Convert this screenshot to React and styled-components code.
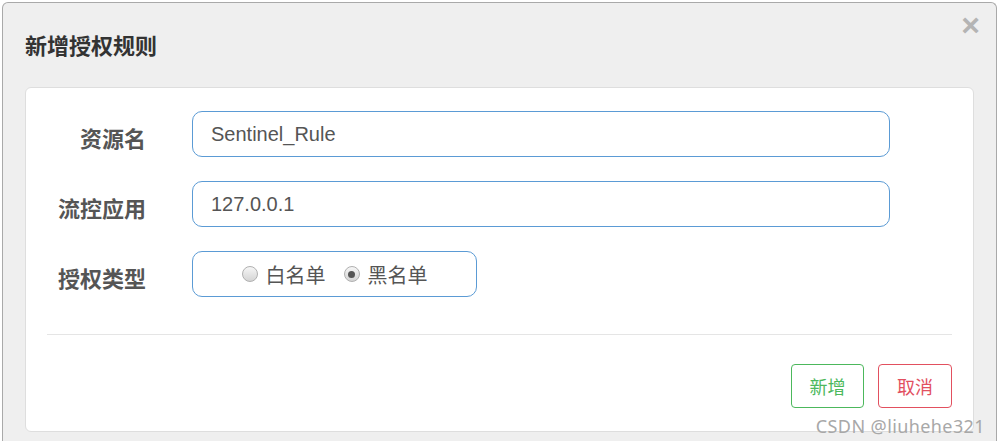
import React from 'react';
import styled, { createGlobalStyle } from 'styled-components';

const GlobalStyle = createGlobalStyle`
  body {
    margin: 0;
    background: #ffffff;
    font-family: "Liberation Sans", "Noto Sans CJK SC", sans-serif;
  }
`;

const Dialog = styled.div`
  position: relative;
  margin: 2px 2px 0 2px;
  height: 439px;
  box-sizing: border-box;
  background: #efefef;
  border: 1px solid #a9a9a9;
  border-bottom: none;
  border-radius: 6px 6px 0 0;
  display: flex;
  flex-direction: column;
`;

const Header = styled.div`
  height: 84px;
  display: flex;
  align-items: flex-start;
  justify-content: space-between;
  padding: 0 16px 0 22px;
  box-sizing: border-box;
`;

const Title = styled.h4`
  margin: 25px 0 0;
  font-size: 22px;
  line-height: 32px;
  font-weight: bold;
  color: #333;
  font-family: "Noto Sans CJK SC", sans-serif;
`;

const Close = styled.span`
  margin-top: 6px;
  font-size: 32px;
  line-height: 32px;
  font-weight: bold;
  color: #b4b4b4;
  font-family: "Liberation Sans", sans-serif;
`;

const Card = styled.div`
  margin: 0 22px;
  height: 345px;
  box-sizing: border-box;
  background: #fff;
  border: 1px solid #dedede;
  border-radius: 6px;
  padding: 23px 0 0;
  display: flex;
  flex-direction: column;
`;

const Row = styled.div`
  display: grid;
  grid-template-columns: 166px auto;
  align-items: center;
  margin-bottom: 24px;
`;

const Label = styled.label`
  text-align: right;
  padding: 6px 46px 0 0;
  font-size: 22px;
  line-height: 30px;
  font-weight: bold;
  color: #555;
  font-family: "Noto Sans CJK SC", sans-serif;
`;

const Input = styled.div`
  width: ${(p) => p.$width}px;
  height: 46px;
  box-sizing: border-box;
  border: 1px solid #5b9bd5;
  border-radius: 10px;
  display: flex;
  align-items: center;
  justify-content: ${(p) => (p.$center ? 'center' : 'flex-start')};
  padding-left: ${(p) => (p.$center ? 0 : 18)}px;
  font-size: 20px;
  color: #555;
`;

const RadioItem = styled.span`
  display: inline-flex;
  align-items: center;
  gap: 8px;
  margin-right: ${(p) => p.$gap}px;
  font-size: 20px;
  color: #555;
  font-family: "Noto Sans CJK SC", sans-serif;
`;

const Dot = styled.span`
  width: 16px;
  height: 16px;
  box-sizing: border-box;
  border-radius: 50%;
  border: 1px solid #b0b0b0;
  background: linear-gradient(#f6f6f6, #d4d4d4);
  display: inline-flex;
  align-items: center;
  justify-content: center;
  &::after {
    content: '';
    width: 7px;
    height: 7px;
    border-radius: 50%;
    background: ${(p) => (p.$checked ? '#555' : 'transparent')};
  }
`;

const Divider = styled.hr`
  margin: 13px 21px 0 21px;
  border: none;
  border-top: 1px solid #e5e5e5;
`;

const Footer = styled.div`
  display: flex;
  justify-content: flex-end;
  gap: 14px;
  padding: 29px 21px 0 0;
`;

const Button = styled.button`
  width: ${(p) => p.$width}px;
  height: 44px;
  background: #fff;
  border: 1px solid ${(p) => p.$color};
  border-radius: 4px;
  color: ${(p) => p.$color};
  font-size: 18px;
  font-family: "Noto Sans CJK SC", sans-serif;
  padding: 0;
`;

const Watermark = styled.span`
  position: absolute;
  right: 11px;
  bottom: 3px;
  font-family: "Noto Sans", sans-serif;
  font-size: 18px;
  color: #a8a8a8;
  letter-spacing: 0.4px;
`;

export default function App() {
  return (
    <>
      <GlobalStyle />
      <Dialog>
        <Header>
          <Title>新增授权规则</Title>
          <Close>×</Close>
        </Header>
        <Card>
          <Row>
            <Label>资源名</Label>
            <Input $width={698}>Sentinel_Rule</Input>
          </Row>
          <Row>
            <Label>流控应用</Label>
            <Input $width={698}>127.0.0.1</Input>
          </Row>
          <Row>
            <Label>授权类型</Label>
            <Input $width={285} $center>
              <RadioItem $gap={18}>
                <Dot />
                白名单
              </RadioItem>
              <RadioItem $gap={0}>
                <Dot $checked />
                黑名单
              </RadioItem>
            </Input>
          </Row>
          <Divider />
          <Footer>
            <Button $width={73} $color="#4cb85c">新增</Button>
            <Button $width={74} $color="#e2505f">取消</Button>
          </Footer>
        </Card>
        <Watermark>CSDN @liuhehe321</Watermark>
      </Dialog>
    </>
  );
}
